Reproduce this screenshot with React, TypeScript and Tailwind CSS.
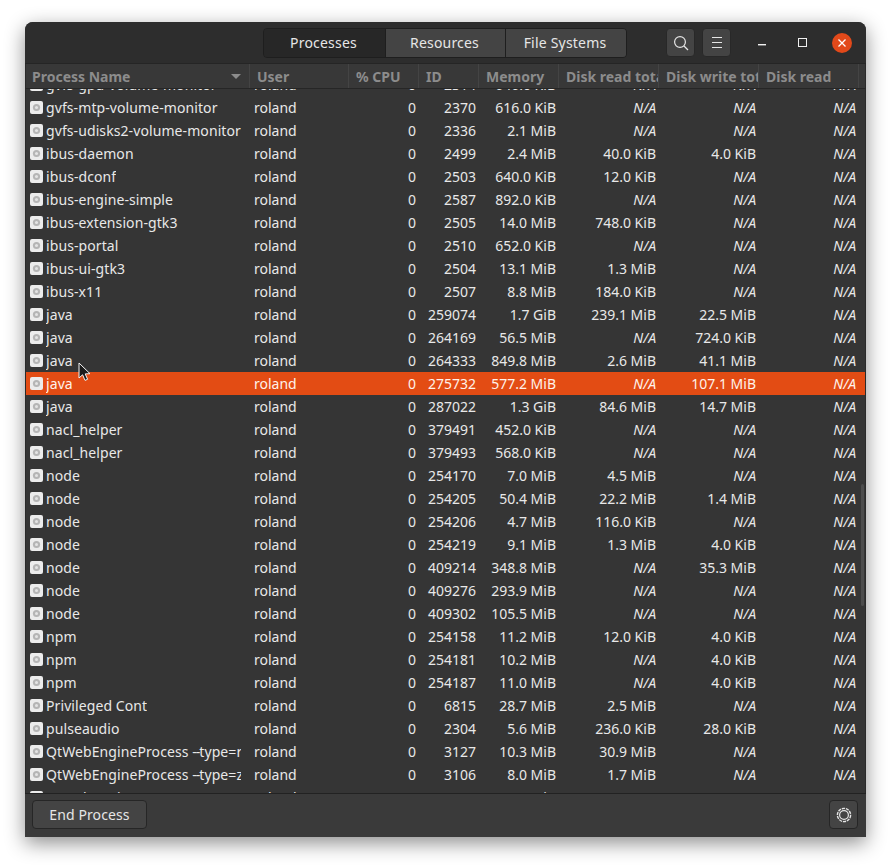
import React from "react";

type R = [string, string, string, string, string, string];
const rows: R[] = [
  ["gvfs-gpu-volume-monitor", "2314", "646.0 KiB", "N/A", "N/A", "N/A"],
  ["gvfs-mtp-volume-monitor", "2370", "616.0 KiB", "N/A", "N/A", "N/A"],
  ["gvfs-udisks2-volume-monitor", "2336", "2.1 MiB", "N/A", "N/A", "N/A"],
  ["ibus-daemon", "2499", "2.4 MiB", "40.0 KiB", "4.0 KiB", "N/A"],
  ["ibus-dconf", "2503", "640.0 KiB", "12.0 KiB", "N/A", "N/A"],
  ["ibus-engine-simple", "2587", "892.0 KiB", "N/A", "N/A", "N/A"],
  ["ibus-extension-gtk3", "2505", "14.0 MiB", "748.0 KiB", "N/A", "N/A"],
  ["ibus-portal", "2510", "652.0 KiB", "N/A", "N/A", "N/A"],
  ["ibus-ui-gtk3", "2504", "13.1 MiB", "1.3 MiB", "N/A", "N/A"],
  ["ibus-x11", "2507", "8.8 MiB", "184.0 KiB", "N/A", "N/A"],
  ["java", "259074", "1.7 GiB", "239.1 MiB", "22.5 MiB", "N/A"],
  ["java", "264169", "56.5 MiB", "N/A", "724.0 KiB", "N/A"],
  ["java", "264333", "849.8 MiB", "2.6 MiB", "41.1 MiB", "N/A"],
  ["java", "275732", "577.2 MiB", "N/A", "107.1 MiB", "N/A"],
  ["java", "287022", "1.3 GiB", "84.6 MiB", "14.7 MiB", "N/A"],
  ["nacl_helper", "379491", "452.0 KiB", "N/A", "N/A", "N/A"],
  ["nacl_helper", "379493", "568.0 KiB", "N/A", "N/A", "N/A"],
  ["node", "254170", "7.0 MiB", "4.5 MiB", "N/A", "N/A"],
  ["node", "254205", "50.4 MiB", "22.2 MiB", "1.4 MiB", "N/A"],
  ["node", "254206", "4.7 MiB", "116.0 KiB", "N/A", "N/A"],
  ["node", "254219", "9.1 MiB", "1.3 MiB", "4.0 KiB", "N/A"],
  ["node", "409214", "348.8 MiB", "N/A", "35.3 MiB", "N/A"],
  ["node", "409276", "293.9 MiB", "N/A", "N/A", "N/A"],
  ["node", "409302", "105.5 MiB", "N/A", "N/A", "N/A"],
  ["npm", "254158", "11.2 MiB", "12.0 KiB", "4.0 KiB", "N/A"],
  ["npm", "254181", "10.2 MiB", "N/A", "4.0 KiB", "N/A"],
  ["npm", "254187", "11.0 MiB", "N/A", "4.0 KiB", "N/A"],
  ["Privileged Cont", "6815", "28.7 MiB", "2.5 MiB", "N/A", "N/A"],
  ["pulseaudio", "2304", "5.6 MiB", "236.0 KiB", "28.0 KiB", "N/A"],
  ["QtWebEngineProcess --type=renderer", "3127", "10.3 MiB", "30.9 MiB", "N/A", "N/A"],
  ["QtWebEngineProcess --type=zygote", "3106", "8.0 MiB", "1.7 MiB", "N/A", "N/A"],
  ["QtWebEngineProcess", "3100", "4.2 MiB", "N/A", "N/A", "N/A"],
];

const grid = "grid grid-cols-[224px_99px_70px_60px_80px_100px_100px_100px_6px]";

function ProcIcon() {
  return (
    <svg width="13" height="13" viewBox="0 0 13 13" className="shrink-0">
      <rect x="0" y="0" width="13" height="13" rx="2" fill="#ececec" />
      <circle cx="6.5" cy="6.5" r="3.6" fill="#b5b5b5" />
      <circle cx="6.5" cy="6.5" r="1.5" fill="#e4e4e4" />
    </svg>
  );
}

function Value({ v }: { v: string }) {
  return (
    <div className={`pr-[3px] text-right whitespace-nowrap ${v === "N/A" ? "italic" : ""}`}>{v}</div>
  );
}

function Name({ text }: { text: string }) {
  const at = text.indexOf("--");
  if (at < 0) return <span className="overflow-hidden tracking-[0.09px]">{text}</span>;
  return (
    <span className="overflow-hidden tracking-[0.09px]">
      {text.slice(0, at)}
      <span className="tracking-[-1px]">--</span>
      {text.slice(at + 2)}
    </span>
  );
}

function Row({ r, selected }: { r: R; selected: boolean }) {
  return (
    <div className={`${grid} h-[23px] items-center ${selected ? "bg-[#e34c14] text-[#fff2ea]" : "text-[#e8e8e8]"}`}>
      <div className="flex items-center gap-[3px] pl-[4px] pr-[9px] overflow-hidden whitespace-nowrap">
        <ProcIcon />
        <Name text={r[0]} />
      </div>
      <div className="pl-[4px]">roland</div>
      <Value v="0" />
      <Value v={r[1]} />
      <Value v={r[2]} />
      <Value v={r[3]} />
      <Value v={r[4]} />
      <Value v={r[5]} />
      <div />
    </div>
  );
}

const heads = ["User", "% CPU", "ID", "Memory", "Disk read total", "Disk write total", "Disk read"];

export default function App() {
  return (
    <div className="h-[865px] w-[891px] bg-white pl-[25px] pt-[22px] overflow-hidden font-['Noto_Sans',sans-serif] text-[14px] leading-[23px]">
      <div className="relative flex h-[815px] w-[841px] flex-col overflow-hidden rounded-t-[8px] bg-[#353535] shadow-[0_6px_20px_rgba(0,0,0,0.45)]">
        {/* Title bar */}
        <div className="flex h-[42px] shrink-0 items-center border-b border-[#252525] bg-[#2d2d2d] pl-[238px] text-[#e6e6e6]">
          <div className="flex h-[30px] w-[364px] overflow-hidden rounded-[4px] border border-[#1e1e1e] tracking-[0.2px]">
            <div className="flex w-[121px] items-center justify-center bg-[#272727] pr-[2px]">Processes</div>
            <div className="flex w-[120px] items-center justify-center border-l border-[#1e1e1e] bg-[#444444] pr-[2px]">Resources</div>
            <div className="flex flex-1 items-center justify-center border-l border-[#1e1e1e] bg-[#444444] pr-[2px]">File Systems</div>
          </div>
          <div className="ml-[39px] flex h-[29px] w-[29px] items-center justify-center rounded-[4px] border border-[#282828] bg-[#444444]">
            <svg width="16" height="16" viewBox="0 0 16 16" fill="none" stroke="#e6e6e6" strokeWidth="1.2">
              <circle cx="7" cy="7" r="5.4" />
              <path d="M11 11l4 4" />
            </svg>
          </div>
          <div className="ml-[7px] flex h-[29px] w-[29px] items-center justify-center rounded-[4px] border border-[#282828] bg-[#444444]">
            <svg width="12" height="11" viewBox="0 0 12 11" stroke="#e6e6e6" strokeWidth="1">
              <path d="M1 0.5h10M1 5.5h10M1 10.5h10" />
            </svg>
          </div>
          <svg width="8" height="2" viewBox="0 0 8 2" className="ml-[27px] mt-[4px]">
            <rect width="8" height="1.4" fill="#f0f0f0" />
          </svg>
          <svg width="9" height="9" viewBox="0 0 9 9" fill="none" stroke="#f0f0f0" className="ml-[32px]">
            <rect x="0.5" y="0.5" width="8" height="8" />
          </svg>
          <div className="ml-[25px] flex h-[20px] w-[20px] items-center justify-center rounded-full bg-[#e2491a]">
            <svg width="8" height="8" viewBox="0 0 8 8" stroke="#ffffff" strokeWidth="1.3">
              <path d="M0.5 0.5l7 7M7.5 0.5l-7 7" />
            </svg>
          </div>
        </div>

        {/* Column header */}
        <div className={`${grid} z-10 h-[25px] shrink-0 items-center border-x border-b border-x-[#2a2a2a] border-b-[#262626] bg-[#383838] font-bold text-[#8c8c8c]`}>
          <div className="relative flex h-full items-center justify-between border-r border-[#444444] pl-[6px] pr-[8px]">
            <span>Process Name</span>
            <svg width="10" height="5" viewBox="0 0 10 5"><path d="M0 0h10L5 5z" fill="#8c8c8c" /></svg>
          </div>
          {heads.map((h) => (
            <div key={h} className="flex h-full items-center overflow-hidden whitespace-nowrap border-r border-[#444444] pl-[7px]">{h}</div>
          ))}
          <div />
        </div>

        {/* Table body */}
        <div className="h-[704px] shrink-0 overflow-hidden border-x border-[#2a2a2a]">
          <div className="-mt-[16px]">
            {rows.map((r, i) => (
              <Row key={i} r={r} selected={i === 13} />
            ))}
          </div>
        </div>

        {/* Footer */}
        <div className="flex h-[44px] shrink-0 items-center justify-between border-t border-[#222222] bg-[#3a3a3a] pb-[2px] pl-[7px] pr-[8px] text-[#e6e6e6]">
          <div className="flex h-[29px] w-[115px] items-center justify-center rounded-[4px] border border-[#262626] bg-[#444444] tracking-[0.1px]">End Process</div>
          <div className="flex h-[29px] w-[29px] items-center justify-center rounded-[4px] border border-[#262626] bg-[#444444]">
            <svg width="16" height="16" viewBox="0 0 16 16" fill="none" stroke="#e6e6e6">
              <circle cx="8" cy="8" r="4.4" strokeWidth="1.2" />
              <circle cx="8" cy="8" r="6.6" strokeWidth="1.4" strokeDasharray="3.2 0.9" />
            </svg>
          </div>
        </div>

        {/* Overlay scrollbar */}
        <div className="absolute left-[836px] top-[462px] h-[122px] w-[3px] rounded-full bg-[#4c4c4c]" />

        {/* Mouse pointer */}
        <svg width="14" height="20" viewBox="0 0 14 20" className="absolute left-[53px] top-[340px]">
          <path d="M1 1v15l3.6-3.2 2.4 5.6 2.6-1.1-2.4-5.4 4.8-.2z" fill="#1c1c1c" stroke="#f5f5f5" strokeWidth="1" />
        </svg>
      </div>
    </div>
  );
}
